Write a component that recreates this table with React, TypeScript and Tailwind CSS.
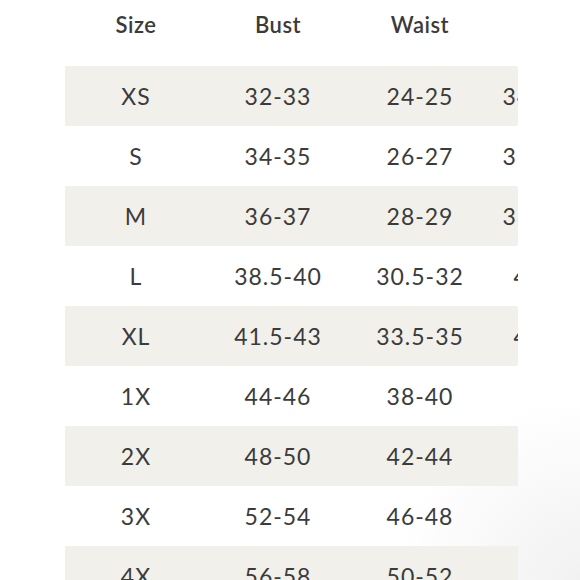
const headers = ['Size', 'Bust', 'Waist', 'Hip'];

const rows = [
  ['XS', '32-33', '24-25', '34-35'],
  ['S', '34-35', '26-27', '36-37'],
  ['M', '36-37', '28-29', '38-39'],
  ['L', '38.5-40', '30.5-32', '41-42'],
  ['XL', '41.5-43', '33.5-35', '44-45'],
  ['1X', '44-46', '38-40', '48'],
  ['2X', '48-50', '42-44', '52'],
  ['3X', '52-54', '46-48', '56'],
  ['4X', '56-58', '50-52', '60'],
];

export default function App() {
  return (
    <div
      className="w-[580px] h-[580px] overflow-hidden bg-white bg-[radial-gradient(circle_at_100%_100%,#f1f1f1,#ffffff_22%)] text-[#3b3b3b]"
      style={{ fontFamily: 'Lato, "Noto Sans", sans-serif' }}
    >
      <div className="ml-[65px] w-[453px] overflow-hidden">
        {/* Header */}
        <div className="flex h-[48px] items-center mb-[18px]">
          {headers.map((h, i) => (
            <div
              key={h}
              className={`${i === 3 ? 'w-[96px]' : 'w-[142px]'} shrink-0 text-center text-[22px] font-semibold tracking-[0.5px] whitespace-nowrap`}
            >
              {h}
            </div>
          ))}
        </div>

        {/* Rows */}
        {rows.map((r, ri) => (
          <div
            key={r[0]}
            className={`flex h-[60px] items-center ${ri % 2 === 0 ? 'bg-[#f2f0eb]' : 'bg-transparent'}`}
          >
            {r.map((c, ci) => (
              <div
                key={ci}
                className={`${ci === 3 ? (ri < 3 ? 'w-[90px]' : 'w-[90px] pl-[22px]') : 'w-[142px]'} shrink-0 text-center text-[23px] tracking-[1px] whitespace-nowrap`}
              >
                {c}
              </div>
            ))}
          </div>
        ))}
      </div>
    </div>
  );
}
